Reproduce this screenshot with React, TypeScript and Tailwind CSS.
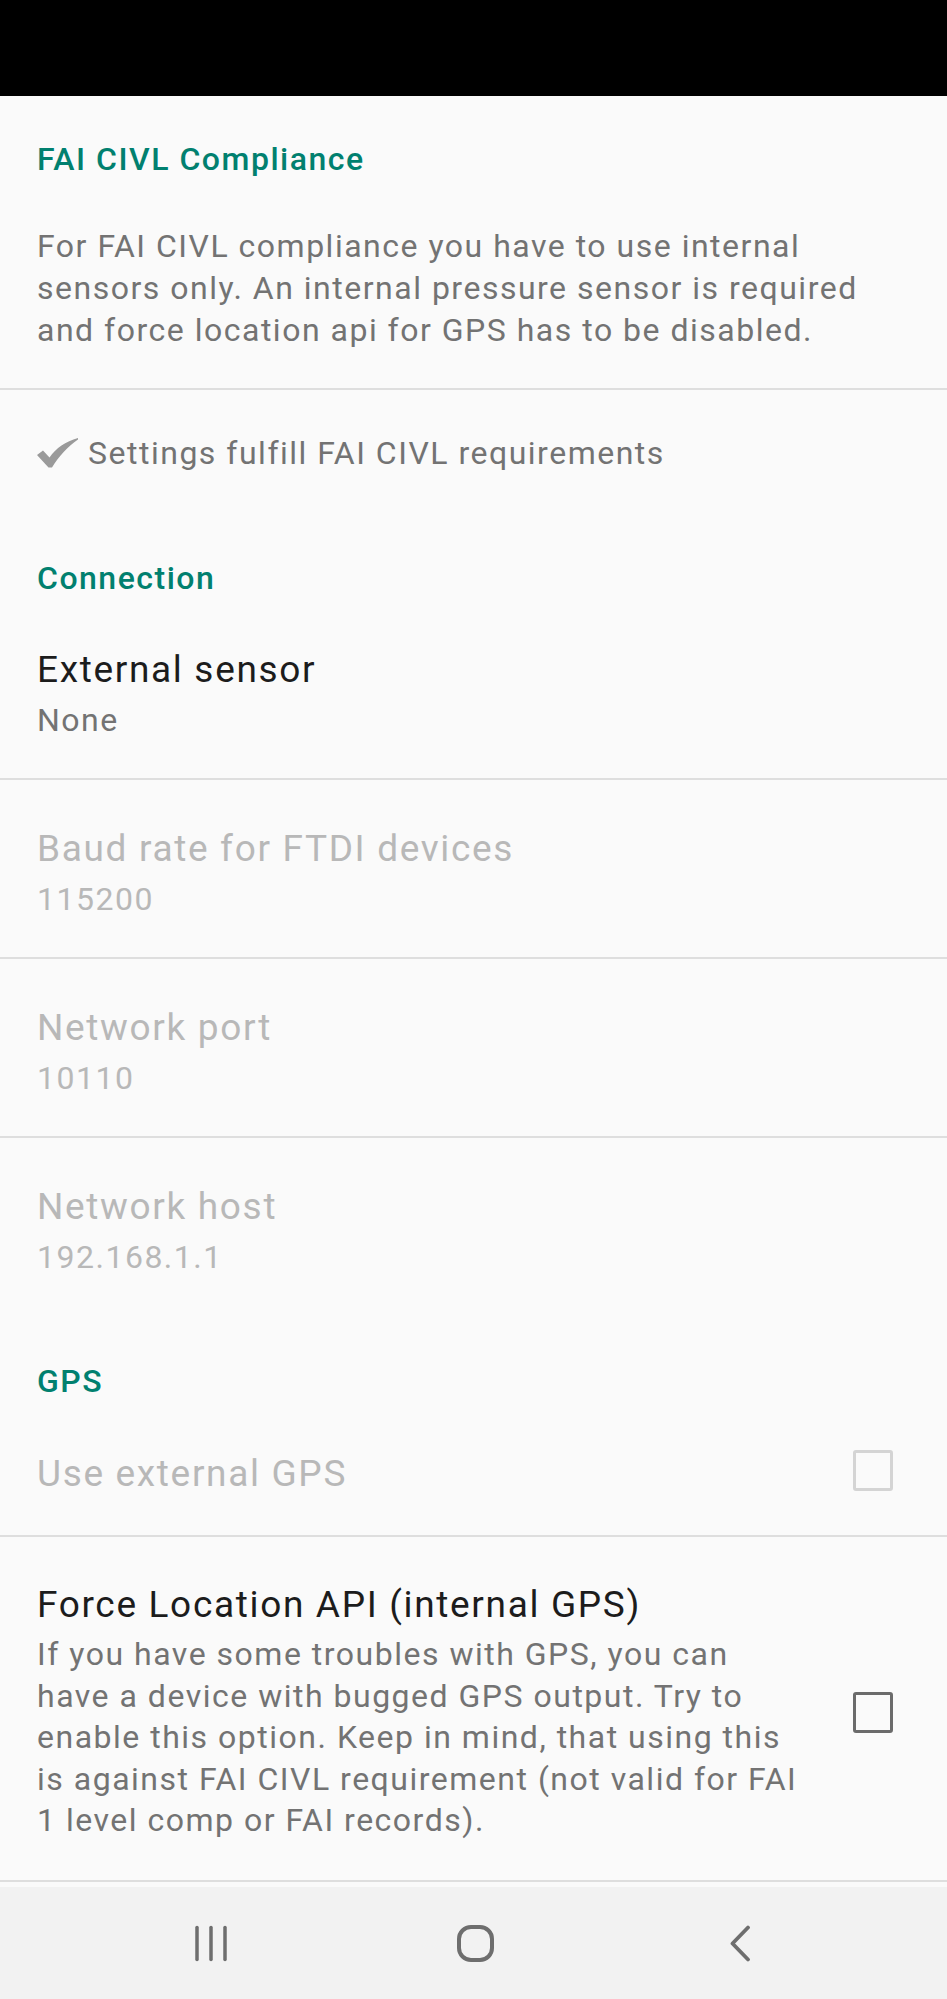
import React from "react";

const FONT = "font-['Roboto','Noto_Sans',sans-serif]";

function Divider() {
  return <div className="h-[2px] bg-[#dedede] shrink-0" />;
}

function Row({
  title,
  summary,
  disabled,
}: {
  title: string;
  summary: string;
  disabled?: boolean;
}) {
  return (
    <div className="flex flex-col pl-[37px] pr-[54px] pt-[47px] pb-[37px] shrink-0">
      <div
        className={`text-[37px] leading-[44px] tracking-[0.045em] whitespace-nowrap ${
          disabled ? "text-[#b8b8b8]" : "text-[#1c1c1c]"
        }`}
      >
        {title}
      </div>
      <div
        className={`mt-[7px] text-[32px] leading-[42px] tracking-[0.047em] whitespace-nowrap ${
          disabled ? "text-[#b8b8b8]" : "text-[#737373]"
        }`}
      >
        {summary}
      </div>
    </div>
  );
}

function Checkbox({ disabled }: { disabled?: boolean }) {
  return (
    <div
      className={`w-[40px] h-[41px] rounded-[3px] border-[3px] shrink-0 ${
        disabled ? "border-[#d4d4d4]" : "border-[#6b6b6b]"
      }`}
    />
  );
}

function Category({ children, className }: { children: React.ReactNode; className?: string }) {
  return (
    <div
      className={`px-[37px] text-[32px] leading-[38px] tracking-[0.047em] font-medium text-[#01806f] whitespace-nowrap ${className ?? ""}`}
    >
      {children}
    </div>
  );
}

export default function App() {
  return (
    <div className={`w-[947px] h-[1999px] bg-[#fafafa] flex flex-col overflow-hidden ${FONT}`}>
      <div className="h-[96px] bg-black shrink-0" />

      <div className="flex-1 flex flex-col overflow-hidden">
        {/* FAI CIVL Compliance */}
        <Category className="mt-[44px]">FAI CIVL Compliance</Category>
        <div className="px-[37px] mt-[47px] pb-[37px] text-[32px] leading-[42px] tracking-[0.047em] text-[#737373] whitespace-nowrap">
          For FAI CIVL compliance you have to use internal
          <br />
          sensors only. An internal pressure sensor is required
          <br />
          and force location api for GPS has to be disabled.
        </div>
        <Divider />

        <div className="flex items-center pl-[37px] pt-[42px] text-[32px] leading-[42px] tracking-[0.047em] text-[#737373]">
          <svg width="41" height="30" viewBox="0 0 41 30" className="shrink-0">
            <path
              d="M0 17 L6 12.5 L12.5 19.5 C19 10 28.5 3.5 41 0 L41 1.5 C31 8.5 21.5 18.5 15 29.5 L11.5 29.5 Z"
              fill="#9a9a9a"
            />
          </svg>
          <span className="ml-[10px] whitespace-nowrap">Settings fulfill FAI CIVL requirements</span>
        </div>

        {/* Connection */}
        <Category className="mt-[85px] mb-[4px]">Connection</Category>
        <Row title="External sensor" summary="None" />
        <Divider />
        <Row title="Baud rate for FTDI devices" summary="115200" disabled />
        <Divider />
        <Row title="Network port" summary="10110" disabled />
        <Divider />
        <Row title="Network host" summary="192.168.1.1" disabled />

        {/* GPS */}
        <Category className="mt-[47px] mb-[4px]">GPS</Category>
        <div className="flex items-center pl-[37px] pr-[54px] pt-[46px] pb-[38px]">
          <div className="flex-1 text-[37px] leading-[44px] tracking-[0.045em] text-[#b8b8b8] whitespace-nowrap">
            Use external GPS
          </div>
          <div className="mb-[6px]">
            <Checkbox disabled />
          </div>
        </div>
        <Divider />
        <div className="flex items-center pl-[37px] pr-[54px] pt-[46px] pb-[38px]">
          <div className="flex-1 flex flex-col">
            <div className="text-[37px] leading-[44px] tracking-[0.045em] text-[#1c1c1c] whitespace-nowrap">
              Force Location API (internal GPS)
            </div>
            <div className="mt-[7px] text-[32px] leading-[41.5px] tracking-[0.047em] text-[#737373] whitespace-nowrap">
              If you have some troubles with GPS, you can
              <br />
              have a device with bugged GPS output. Try to
              <br />
              enable this option. Keep in mind, that using this
              <br />
              is against FAI CIVL requirement (not valid for FAI
              <br />
              1 level comp or FAI records).
            </div>
          </div>
          <Checkbox />
        </div>
        <Divider />
      </div>

      {/* Navigation bar */}
      <div className="h-[112px] bg-[#f2f2f2] shrink-0 flex items-center pl-[195px]">
        <svg width="33" height="37" viewBox="0 0 33 37" className="shrink-0">
          <g stroke="#6e6e6e" strokeWidth="3.5" strokeLinecap="round">
            <line x1="2" y1="2.5" x2="2" y2="34.5" />
            <line x1="16" y1="2.5" x2="16" y2="34.5" />
            <line x1="30" y1="2.5" x2="30" y2="34.5" />
          </g>
        </svg>
        <svg width="37" height="37" viewBox="0 0 37 37" className="ml-[229px] shrink-0">
          <rect x="2" y="2" width="33" height="33" rx="12" fill="none" stroke="#6e6e6e" strokeWidth="4" />
        </svg>
        <svg width="22" height="37" viewBox="0 0 22 37" className="ml-[235px] shrink-0">
          <polyline
            points="19,2.5 3.5,18.5 19,34.5"
            fill="none"
            stroke="#6e6e6e"
            strokeWidth="3.8"
            strokeLinecap="round"
            strokeLinejoin="round"
          />
        </svg>
      </div>
    </div>
  );
}
